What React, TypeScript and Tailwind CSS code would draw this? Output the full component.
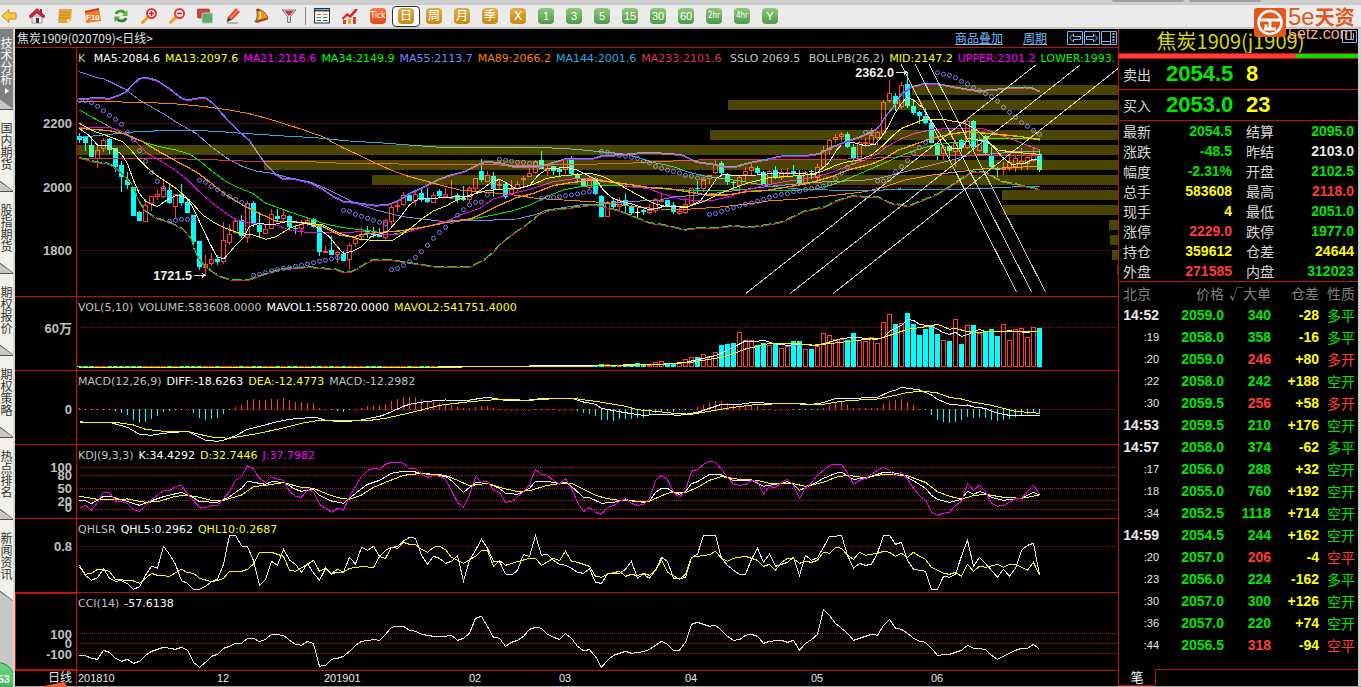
import React from "react";

type Dir = "u" | "d" | "w";

type Candle = {
  dir: Dir;
  high: number;
  top: number;
  bottom: number;
  low: number;
};

type PlotLine = {
  color: string;
  points: string;
  width?: number;
};

type Label = {
  text: string;
  color: string;
};

const STEP = 18;
const FIRST = 10.5;

// direction, high, body top, body bottom, low (three chart units per pixel)
const candles: Candle[] = `
d265,273,285,293 d273,273,294,318 d280,300,336,336 u300,316,341,369 u280,286,312,320 d280,282,314,326
d310,310,366,382 d348,361,395,441 d380,404,420,433 d426,426,513,513 d497,502,528,528 u463,480,530,530
u453,453,477,497 u433,447,455,464 u406,429,454,460 d418,436,473,478 u447,447,485,520 d418,448,474,482
d460,472,503,503 d510,510,590,613 d588,588,665,675 u630,656,668,693 u624,642,656,662 d630,642,650,659
u532,586,650,656 u536,568,592,600 u520,529,562,567 d509,526,574,579 u468,474,577,593 d467,474,536,547
d500,540,560,580 u539,553,566,566 u493,508,550,550 d493,513,521,528 u496,511,521,529 d510,513,546,557
d540,549,552,567 u526,538,551,570 u520,526,534,542 d519,522,545,548 d536,540,620,632 u601,618,622,625
d574,614,630,630 u617,622,630,653 d618,626,648,648 u594,601,644,674 u576,583,596,606 u547,568,575,587
d542,556,562,579 d547,566,571,578 d550,570,576,576 u521,526,578,582 u481,486,530,541 u471,479,486,502
u441,451,479,484 d450,451,468,468 u439,446,468,482 d432,445,466,470 d430,461,470,474 u440,450,472,474
d432,438,454,458 u430,447,455,458 u406,455,458,460 d444,450,465,474 d422,460,464,468 u423,430,464,475
u398,398,431,438 d343,378,405,412 u378,391,410,412 d380,393,432,457 u402,418,422,434 d412,417,455,462
u405,432,445,449 u407,418,432,440 u392,400,405,427 u364,384,394,394 u345,349,382,386 d318,346,371,371
u362,368,378,392 d362,364,377,391 d370,373,380,395 u338,343,373,386 d333,342,388,394 d384,389,401,412
d400,402,425,425 u393,401,427,434 d396,400,447,450 d450,453,515,515 u468,470,515,515 d460,468,486,492
u457,466,486,500 d445,466,480,500 d480,487,503,510 w487,501,503,519 d491,495,500,510 u476,496,502,506
u460,462,496,504 u448,465,468,470 d466,466,481,483 d471,480,502,508 u482,498,506,510 u460,478,503,508
u430,430,480,480 d407,429,431,447 u398,402,430,440 u390,391,402,416 u343,357,382,386 d349,355,384,389
d384,388,410,420 d405,411,414,439 u390,396,423,446 u366,379,389,408 u356,367,376,390 d362,370,384,388
d377,381,416,418 u375,379,418,424 d363,375,395,402 u371,381,397,405 u370,380,383,392 d360,378,388,390
d375,390,413,422 u377,381,413,420 d375,377,381,403 u356,367,397,411 u302,314,364,368 u282,286,313,330
u267,276,284,293 u262,268,275,291 d262,268,307,310 d298,306,340,345 u288,292,346,350 u279,292,296,307
u250,270,297,302 u259,262,277,300 u166,170,265,271 u106,145,167,173 d143,153,176,197 u112,121,185,193
d82,117,183,189 d163,183,204,210 d198,201,214,237 d189,212,234,237 d231,234,294,295 d294,294,332,345
u301,306,325,344 d300,303,317,340 u285,294,321,365 d283,286,310,320 u223,229,307,312 d226,228,306,316
u277,285,317,320 d270,273,323,330 d306,333,366,369 d366,369,376,395 u350,369,373,389 u330,352,370,377
u330,340,366,380 u310,349,356,376 u333,337,355,374 u309,327,346,350 d314,327,375,382
`
  .trim()
  .split(/\s+/)
  .map((item) => {
    const [high, top, bottom, low] = item.slice(1).split(",").map(Number);
    return { dir: item[0] as Dir, high, top, bottom, low };
  });

const upperBand =
  "10,162 64,157 100,160 130,150 150,140 170,118 190,100 208,96 244,106 280,130 316,158 334,165 370,158 388,158 410,172 442,210 496,265 520,285 545,322 568,355 600,388 620,400 660,402 700,412 740,432 770,452 800,468 840,473 900,481 940,477 970,465 1000,445 1040,427 1082,405 1122,390 1162,380 1192,365 1212,355 1232,349 1272,353 1312,364 1352,366 1392,364 1432,352 1472,340 1552,340 1577,332 1632,329 1682,324 1742,323 1812,328 1832,335 1862,350 1912,357 1942,363 1982,363 2032,350 2080,341 2127,330 2187,332 2232,325 2262,308 2307,290 2352,275 2387,260 2407,247 2427,215 2452,185 2477,145 2507,125 2547,114 2597,118 2647,128 2707,137 2767,132 2807,127 2847,126 2867,128 2891,138";

const lowerBand =
  "10,337 60,350 100,355 140,385 170,420 190,470 210,498 240,518 280,530 320,550 345,578 360,625 380,655 410,680 430,692 460,702 520,703 560,688 620,670 700,665 780,672 800,680 825,680 860,660 890,643 940,643 1050,660 1082,664 1182,665 1222,645 1252,620 1272,597 1312,565 1352,538 1392,505 1422,494 1462,490 1552,478 1577,482 1632,497 1672,513 1722,533 1762,538 1827,553 1872,547 1922,547 1972,541 2022,546 2080,537 2117,530 2187,497 2247,485 2277,468 2327,452 2407,455 2442,473 2497,482 2547,462 2587,445 2627,420 2667,393 2687,380 2727,380 2777,408 2827,418 2891,432";

const priceLines: PlotLine[] = [
  {
    color: "#8080e8",
    points:
      "10,80 60,97 85,102 150,134 190,165 260,205 310,237 360,265 400,300 450,338 500,365 540,378 590,385 660,404 700,410 760,435 800,455 840,475 900,495 940,505 980,515 1040,522 1112,531 1192,525 1252,525 1322,522 1382,508 1412,495 1462,488 1512,480 1592,476 1652,470 1752,465 1792,456 1842,452 1892,448 1952,440 2032,430 2080,424 2127,420 2217,412 2307,408 2367,405 2407,400 2467,385 2517,373 2567,360 2627,345 2677,332 2767,325 2827,320 2891,318",
  },
  {
    color: "#ff8000",
    points:
      "10,169 100,170 280,175 380,184 460,195 520,206 600,228 680,254 740,275 800,308 860,335 900,355 950,377 1000,395 1050,408 1092,420 1152,435 1212,440 1292,447 1382,460 1462,465 1592,473 1672,485 1752,492 1832,493 1932,486 2032,475 2077,468 2167,462 2267,452 2367,440 2417,428 2487,405 2567,390 2667,378 2717,372 2817,367 2891,364",
  },
  {
    color: "#30a8e0",
    points:
      "10,277 100,268 180,260 260,257 350,256 420,259 500,265 640,274 720,278 820,288 920,294 1000,300 1092,307 1272,308 1362,307 1462,310 1532,316 1592,322 1652,328 1692,340 1732,352 1792,365 1832,380 1882,392 1932,400 1992,408 2077,423 2167,432 2287,436 2407,436 2467,432 2627,433 2727,430 2807,426 2891,425",
  },
  {
    color: "#e03058",
    points:
      "10,342 100,340 260,340 330,342 400,344 500,348 600,350 700,350 800,355 1050,358 1150,358 1232,359 1350,362 1500,358 1632,356 1732,351 1832,346 1932,343 2217,343 2317,342 2427,338 2507,333 2567,330 2667,332 2891,332",
  },
  {
    color: "#00e800",
    points:
      "10,195 60,223 110,250 160,275 200,290 250,305 300,315 340,327 370,347 410,380 450,410 480,425 530,445 570,475 640,500 700,520 740,535 800,548 860,555 900,560 930,570 970,565 1000,555 1082,538 1122,528 1192,522 1252,510 1312,497 1362,480 1412,455 1462,435 1512,425 1562,420 1632,422 1712,428 1792,434 1892,437 1992,434 2127,438 2217,432 2267,420 2307,405 2347,388 2407,362 2467,335 2517,316 2567,302 2627,293 2687,288 2747,280 2891,282",
  },
  {
    color: "#f000f0",
    points:
      "10,247 100,247 140,260 180,290 210,322 240,340 290,370 330,400 370,440 410,475 450,505 480,525 530,535 600,540 640,555 700,563 780,563 860,560 900,567 950,570 1000,560 1050,545 1112,528 1152,510 1212,490 1252,462 1312,445 1372,430 1432,410 1502,400 1552,400 1602,410 1662,425 1712,430 1762,447 1812,462 1862,467 1912,466 1962,455 2012,435 2067,420 2127,410 2207,398 2267,383 2317,362 2367,345 2407,325 2427,308 2477,280 2517,265 2567,254 2627,250 2717,250 2747,260 2787,275 2827,290 2891,315",
  },
  {
    color: "#f09000",
    width: 4,
    points:
      "10,250 100,257 150,268 200,290 250,320 300,348 360,380 400,410 450,450 500,480 550,505 600,528 700,535 740,545 790,570 830,576 860,568 900,563 980,557 1050,545 1132,528 1182,522 1222,505 1272,480 1322,458 1372,445 1432,422 1492,412 1552,405 1612,412 1672,420 1722,428 1772,430 1832,440 1892,450 1952,450 2012,440 2067,437 2127,427 2197,415 2267,395 2317,375 2387,357 2427,340 2467,315 2517,298 2567,280 2627,267 2677,260 2767,268 2837,275 2891,285",
  },
  {
    color: "#f8f800",
    points:
      "10,235 50,257 100,275 140,290 165,315 190,345 210,365 240,390 300,430 340,465 380,510 410,530 450,550 490,565 530,570 570,583 600,575 640,550 690,533 740,540 790,565 850,582 910,588 950,586 980,567 1010,545 1040,520 1072,498 1112,482 1142,465 1182,450 1232,437 1282,432 1332,430 1372,418 1412,400 1462,392 1542,385 1582,395 1632,420 1682,448 1732,475 1772,485 1832,486 1882,470 1932,445 1972,430 2012,415 2080,398 2127,395 2187,390 2237,380 2277,362 2307,352 2347,345 2387,330 2417,305 2447,275 2477,250 2507,238 2547,222 2607,224 2667,235 2707,258 2737,290 2767,315 2817,322 2891,328",
  },
  {
    color: "#f0f0f0",
    points:
      "10,250 40,272 64,300 100,303 136,327 154,355 172,405 190,445 210,470 244,485 280,460 305,450 334,460 352,490 380,550 400,592 424,638 445,640 480,600 505,575 520,545 550,535 586,540 640,528 690,535 715,542 740,560 760,575 780,600 802,626 830,618 856,605 885,575 910,567 935,560 970,520 1000,480 1030,460 1072,460 1142,455 1182,455 1222,430 1247,410 1272,403 1288,412 1322,432 1362,420 1387,390 1414,372 1472,367 1502,375 1532,390 1562,405 1582,435 1607,458 1632,468 1672,478 1722,495 1772,482 1832,488 1872,468 1902,430 1922,400 1942,388 1992,393 2042,390 2107,384 2217,388 2257,355 2282,315 2307,288 2337,294 2367,302 2397,298 2417,275 2437,245 2457,205 2477,175 2492,157 2512,165 2542,190 2567,230 2597,275 2627,310 2657,310 2677,280 2707,285 2727,285 2757,310 2777,335 2807,358 2847,355 2872,342 2891,347",
  },
];

const sar = [
  167, 166, 173, 184, 197, 211, 223, 238, 262, 284, 317, 349, 382, 409, 430,
  529, 526, 523, 523, 523, 406, 412, 424, 434, 446, 455, 463, 472, 482, 691,
  688, 683, 678, 674, 670, 668, 664, 661, 657, 653, 649, 646, 642, 638, 496,
  499, 508, 514, 520, 526, 532, 537, 674, 670, 661, 650, 637, 620, 601, 580,
  562, 547, 530, 511, 494, 480, 472, 471, 449, 425, 343, 346, 349, 352, 352,
  355, 357, 460, 457, 457, 455, 452, 450, 447, 443, 440, 438, 319, 322, 328,
  331, 334, 337, 340, 348, 354, 364, 370, 375, 379, 384, 391, 393, 399, 402,
  508, 506, 499, 493, 488, 483, 478, 474, 469, 463, 457, 452, 448, 446, 440,
  438, 434, 430, 427, 424, 416, 401, 384, 367, 352, 340, 262, 262, 408, 408,
  402, 380, 365, 347, 325, 308, 292, 280, 83, 88, 91, 98, 109, 117, 128, 137,
  146, 155, 169, 187, 202, 217, 233, 244, 256, 268,
];

// turnover by price level: [y, left edge]
const levels = [
  [120, 2507],
  [165, 1956],
  [210, 2679],
  [255, 1902],
  [300, 3],
  [345, 564],
  [390, 888],
  [435, 2778],
  [480, 2781],
  [525, 3099],
  [570, 3102],
  [615, 3108],
  [660, 3123],
];

const trends = [
  [2475, 57, 2822, 742],
  [2517, 57, 2867, 742],
  [2559, 57, 2909, 742],
  [2010, 745, 2879, 60],
  [2143, 745, 3012, 60],
  [2272, 745, 3127, 70],
];

const volumeTops = [
  210, 207, 207, 210, 212, 210, 211, 205, 208, 209, 202, 199, 206, 206, 205,
  193, 187, 187, 178, 184, 172, 151, 148, 144, 112, 136, 136, 151, 144, 151,
  145, 160, 154, 139, 138, 163, 163, 154, 115, 121, 133, 133, 136, 115, 136,
  139, 127, 145, 82, 58, 88, 85, 55, 88, 120, 103, 94, 118, 136, 139, 73, 148,
  91, 91, 115, 109, 103, 124, 88, 136, 103, 100, 127, 97, 100,
];

const macdBars = [
  7, -1, -1, -1, -1, -1, -5, -11, -17, -32, -41, -38, -29, -20, -8, -5, -1, -1,
  1, -11, -26, -32, -29, -26, -14, -2, 10, 16, 31, 34, 31, 31, 34, 34, 37, 30,
  25, 25, 22, 22, 7, 1, -1, -5, -8, -1, 1, 7, 13, 13, 13, 19, 28, 34, 40, 40,
  40, 34, 28, 28, 22, 16, 16, 10, 7, 7, 10, 13, 13, 7, 3, 1, 1, 1, 1, 1, 4, 4,
  4, 4, 1, 1, 1, -5, -13, -14, -20, -32, -32, -35, -29, -29, -29, -26, -26,
  -18, -12, -8, -5, -8, -4, -1, 3, 10, 16, 22, 28, 28, 22, 16, 13, 13, 16, 13,
  4, 4, 1, 1, 1, -1, -1, -1, -1, -1, 7, 13, 20, 23, 16, 7, 7, 7, 7, 7, 19, 28,
  29, 34, 25, 16, 4, -2, -17, -32, -38, -41, -38, -34, -23, -26, -23, -26, -32,
  -35, -32, -29, -23, -17, -14, -8, -14,
];

// the points of the lower panels are "bar index, y"
const volumeLines: PlotLine[] = [
  {
    color: "#f0f0f0",
    points:
      "0,217 60,216 64,214 75,213 96,209 101,202 104,190 106,182 108,166 110,147 111,138 113,139 114,136 116,147 118,151 120,148 123,151 124,146 127,131 129,127 131,130 133,132 134,127 135,109 136,100 137,91 138,74 139,76 140,88 142,94 143,103 144,113 145,118 146,112 147,124 148,119 149,109 150,104 151,109 154,110 155,107 156,110 158,112 160,108",
  },
  {
    color: "#f8f800",
    points:
      "0,218 50,218 64,216 86,213 97,208 102,202 105,193 107,187 109,176 111,162 113,154 115,145 120,147 122,151 125,146 127,142 129,137 132,132 133,132 134,127 136,115 138,103 140,98 142,92 143,88 144,95 145,103 146,100 148,110 150,112 152,109 160,109",
  },
];

const macdLines: PlotLine[] = [
  {
    color: "#f0f0f0",
    points:
      "0,380 2,384 5,382 8,397 10,418 12,421 14,415 18,409 19,418 21,436 23,439 24,436 26,422 28,403 30,394 33,380 35,373 39,367 40,370 41,376 44,381 47,375 50,364 51,358 54,334 55,328 58,319 61,315 64,318 68,307 71,316 75,315 77,310 82,310 84,321 86,328 87,340 90,350 92,356 94,361 97,358 100,361 103,352 105,340 107,328 110,328 112,323 116,325 122,328 124,323 126,310 129,310 133,307 135,290 136,286 137,277 140,285 142,300 143,313 145,328 147,331 148,330 149,336 151,340 152,349 154,358 155,361 160,361",
  },
  {
    color: "#f8f800",
    points:
      "0,382 6,382 9,390 11,403 14,409 18,409 20,418 22,426 25,430 29,418 33,403 37,385 40,376 48,377 51,370 54,358 57,345 60,331 65,320 70,313 75,316 80,310 83,312 86,319 89,328 91,334 93,344 96,349 99,355 102,358 106,346 109,337 113,328 118,326 124,328 127,319 129,316 133,312 136,301 138,292 141,289 143,294 145,307 147,312 149,322 152,331 154,340 156,349 160,355",
  },
];

const kdjLines: PlotLine[] = [
  {
    color: "#f0f0f0",
    points:
      "0,616 1,617 2,626 4,604 5,604 7,614 10,631 12,617 14,605 17,592 19,608 20,620 23,622 25,605 27,580 28,559 31,568 32,560 34,562 36,583 37,589 39,583 40,601 42,618 44,625 46,595 48,568 50,556 52,535 54,529 56,531 59,541 61,544 62,557 64,592 66,563 68,565 70,580 71,595 73,598 74,590 75,580 76,559 78,559 80,566 81,562 82,574 84,607 85,608 87,625 89,622 91,614 94,622 95,619 96,592 97,580 98,580 99,592 100,598 101,590 102,566 103,560 105,538 107,540 109,557 112,556 114,574 117,565 118,560 119,568 120,586 122,570 124,550 126,535 127,532 129,553 131,550 133,538 134,532 135,532 137,538 139,557 141,580 142,601 143,613 145,622 147,613 148,589 149,598 150,590 151,595 152,607 154,616 157,610 159,592 160,600",
  },
  {
    color: "#f8f800",
    points:
      "0,604 3,613 8,612 11,622 13,620 16,604 18,601 20,607 22,616 24,616 27,600 29,575 31,571 34,563 37,577 39,580 41,595 43,608 45,613 47,600 49,577 51,562 54,541 57,535 61,541 63,556 65,572 68,565 70,577 73,590 75,587 78,571 80,566 82,565 84,583 86,601 88,611 90,616 93,619 95,618 98,595 99,592 101,593 103,577 105,556 107,545 110,553 113,556 115,565 119,566 121,574 124,562 126,547 128,541 131,548 134,538 138,542 140,556 141,562 143,590 145,604 147,612 149,602 151,598 154,607 157,610 160,600",
  },
  {
    color: "#f000f0",
    points:
      "0,640 1,631 2,645 3,623 4,592 5,592 6,619 7,619 8,626 9,643 10,650 11,631 12,613 13,601 14,586 15,587 16,575 17,571 18,597 19,617 20,637 21,637 22,632 23,631 24,610 25,590 26,556 27,545 28,512 29,522 30,550 31,562 32,545 33,553 34,556 35,589 36,604 37,607 38,584 39,592 40,628 41,640 42,652 43,640 44,645 45,605 46,575 47,544 48,526 49,520 50,523 51,508 52,502 53,502 54,505 55,520 56,521 57,537 58,547 59,541 60,544 61,553 62,587 63,622 64,637 65,600 66,544 67,562 68,559 69,586 70,593 71,622 72,620 73,605 74,590 75,570 76,523 77,538 78,541 79,557 80,567 81,551 82,580 83,622 84,650 85,637 86,652 87,658 88,637 89,632 90,619 91,611 92,625 93,631 94,629 95,610 96,556 97,541 98,553 99,592 100,607 101,586 102,529 103,523 104,508 105,499 106,502 107,523 108,547 109,568 110,571 111,569 112,556 113,560 114,598 115,574 116,578 117,562 118,553 119,571 120,610 121,578 122,565 123,541 124,526 125,511 126,508 127,508 128,533 129,568 130,556 131,550 132,538 133,526 134,517 135,526 136,544 137,532 138,553 139,580 140,602 141,616 142,652 143,661 144,655 145,652 146,631 147,619 148,565 149,586 150,571 151,590 152,625 153,634 154,631 155,622 156,610 157,610 158,590 159,571 160,597",
  },
];

const qhlLines: PlotLine[] = [
  {
    color: "#e8e8e8",
    points:
      "0,811 1,841 2,856 3,848 4,821 5,850 6,859 7,857 8,866 9,883 10,875 11,841 12,814 13,819 14,754 15,778 16,808 17,857 18,865 19,883 20,883 21,874 22,860 23,852 24,808 25,721 26,721 27,753 28,755 29,797 30,871 31,853 32,799 33,811 34,763 35,795 36,808 37,832 38,806 39,834 40,856 41,821 42,837 43,831 44,831 45,787 46,807 47,757 48,766 49,754 50,784 51,766 52,757 53,755 54,738 55,727 56,730 57,781 58,808 59,784 60,790 61,805 62,799 63,782 64,858 65,796 66,766 67,733 68,760 69,799 70,799 71,837 72,840 73,826 74,778 75,785 76,721 77,781 78,778 79,796 80,808 81,811 82,820 83,832 84,835 85,821 86,862 87,865 88,837 89,835 90,835 91,823 92,799 93,850 94,837 95,850 96,826 97,787 98,799 99,850 100,852 101,847 102,788 103,778 104,721 105,721 106,721 107,790 108,811 109,826 110,838 111,838 112,793 113,760 114,802 115,778 116,814 117,808 118,802 119,787 120,841 121,781 122,796 123,788 124,757 125,724 126,724 127,721 128,781 129,820 130,805 131,811 132,808 133,774 134,721 135,721 136,748 137,742 138,796 139,823 140,826 141,829 142,883 143,883 144,844 145,847 146,838 147,783 148,736 149,814 150,787 151,806 152,826 153,847 154,823 155,844 156,820 157,766 158,751 159,745 160,840",
  },
  {
    color: "#f8f800",
    points:
      "0,817 1,838 2,835 3,823 4,825 5,829 6,853 9,858 10,865 11,850 12,835 13,841 15,844 17,823 18,833 19,835 20,850 22,860 23,857 24,850 25,829 27,829 28,823 29,807 30,772 32,772 34,784 35,826 36,829 38,808 39,796 40,829 41,819 42,835 43,823 44,831 45,820 47,815 49,817 50,785 51,790 52,757 53,760 54,742 55,748 56,748 57,763 58,772 59,757 60,754 61,764 62,787 64,805 66,784 67,766 68,768 69,814 70,796 71,811 73,800 75,790 76,790 77,811 79,790 80,797 81,769 82,799 83,802 85,814 86,844 87,847 88,837 90,829 91,844 92,838 93,842 94,835 95,841 96,826 97,796 98,832 100,853 101,838 102,787 103,784 105,779 106,769 107,790 108,799 109,790 111,784 113,796 114,814 115,808 116,826 117,802 118,790 119,791 120,805 121,799 122,802 123,796 124,772 125,775 126,757 127,760 128,781 129,793 130,772 131,781 133,775 134,769 135,772 136,784 137,775 138,787 139,772 140,784 141,793 142,817 143,826 144,835 145,838 146,832 147,844 148,808 149,829 150,814 151,817 153,808 154,817 155,808 156,808 158,826 159,802 160,841",
  },
];

const cciLines: PlotLine[] = [
  {
    color: "#e8e8e8",
    points:
      "0,1081 1,1082 2,1090 3,1093 4,1066 5,1072 6,1090 7,1099 8,1093 9,1105 10,1099 11,1081 12,1069 14,1057 16,1063 17,1057 18,1066 19,1102 20,1117 21,1102 22,1084 23,1078 24,1060 25,1054 26,1045 27,1045 28,1030 29,1030 30,1040 31,1033 32,1018 34,1021 35,1036 36,1048 37,1051 38,1039 39,1046 40,1114 41,1111 42,1093 43,1090 44,1084 45,1069 46,1051 47,1039 49,1034 50,1036 51,1018 52,997 53,994 54,994 55,1006 56,1009 57,1018 59,1024 61,1024 62,1021 63,1036 64,1030 65,1015 66,970 67,964 68,995 69,1027 70,1030 71,1054 72,1042 73,1036 74,1024 75,1003 76,997 77,1000 78,1018 79,1027 80,1033 81,1016 82,1030 83,1054 84,1067 85,1064 86,1085 87,1117 88,1096 89,1081 91,1069 92,1075 94,1070 95,1063 96,1051 97,1039 98,1048 99,1066 100,1066 101,1042 102,988 103,982 104,988 105,994 106,991 107,1006 108,1024 109,1036 110,1034 111,1021 112,1018 113,1024 114,1045 115,1039 117,1036 118,1042 119,1036 120,1066 121,1045 122,1034 123,1018 124,943 125,961 126,985 128,1015 129,1036 131,1024 132,1018 133,1021 134,991 135,973 136,1000 137,1003 138,1015 139,1030 140,1039 141,1042 142,1060 143,1081 145,1078 147,1066 148,1051 149,1060 151,1063 152,1081 153,1093 155,1075 156,1066 157,1060 158,1060 159,1048 160,1063",
  },
];

const toPoints = (points: string) =>
  points
    .split(" ")
    .map((pair) => {
      const [index, y] = pair.split(",").map(Number);
      return `${FIRST + index * STEP},${y}`;
    })
    .join(" ");

const Lines = ({ lines, indexed }: { lines: PlotLine[]; indexed?: boolean }) => (
  <>
    {lines.map((line, i) => (
      <polyline
        key={i}
        points={indexed ? toPoints(line.points) : line.points}
        fill="none"
        stroke={line.color}
        strokeWidth={line.width ?? 3}
      />
    ))}
  </>
);

const Grid = ({ rows, color = "#b80c0c" }: { rows: number[]; color?: string }) => (
  <>
    {rows.map((y) => (
      <line
        key={y}
        x1="6"
        x2="3123"
        y1={y}
        y2={y}
        stroke={color}
        strokeWidth="3"
        strokeDasharray="3 3"
      />
    ))}
  </>
);

type PanelProps = {
  viewBox: string;
  labels: Label[];
  ticks: { text: string; y: number }[];
  axisBox: string;
  className: string;
  active?: boolean;
  children: React.ReactNode;
};

const Panel: React.FC<PanelProps> = ({
  viewBox,
  labels,
  ticks,
  axisBox,
  className,
  active,
  children,
}) => {
  return (
    <div className={`flex border-b border-[#c01008] ${className}`}>
      <div
        className={`w-[62px] shrink-0 border-r border-[#c01008] ${
          active ? "outline-1 -outline-offset-1 outline-[#c01008]" : ""
        }`}
      >
        <svg viewBox={axisBox} preserveAspectRatio="none" className="block size-full">
          {ticks.map((tick, i) => (
            <text
              key={i}
              x="57"
              y={tick.y}
              textAnchor="end"
              fill="#c0c0c0"
              className="font-['Liberation_Sans','Noto_Sans_CJK_SC',sans-serif] text-[13px] font-bold"
            >
              {tick.text}
            </text>
          ))}
        </svg>
      </div>
      <div className="relative min-w-0 flex-1 overflow-hidden">
        <svg
          viewBox={viewBox}
          preserveAspectRatio="none"
          shapeRendering="crispEdges"
          className="block size-full"
        >
          {children}
        </svg>
        <div className="absolute top-[3px] left-px flex gap-[5px] text-[11px] leading-[15px] whitespace-nowrap">
          {labels.map((label) => (
            <span key={label.text} style={{ color: label.color }}>
              {label.text}
            </span>
          ))}
        </div>
      </div>
    </div>
  );
};

const PricePanel = () => (
  <Panel
    className="min-h-0 flex-1"
    viewBox="3 9 3123 744"
    axisBox="0 0 61 248"
    ticks={[
      { text: "2200", y: 80 },
      { text: "2000", y: 144 },
      { text: "1800", y: 207 },
    ]}
    labels={[
      { text: "K\u00a0", color: "#c0c0c0" },
      { text: "MA5:2084.6", color: "#ffffff" },
      { text: "MA13:2097.6", color: "#ffff00" },
      { text: "MA21:2116.6", color: "#ff00ff" },
      { text: "MA34:2149.9", color: "#00ff00" },
      { text: "MA55:2113.7", color: "#8080ff" },
      { text: "MA89:2066.2", color: "#ff8000" },
      { text: "MA144:2001.6", color: "#30a8e0" },
      { text: "MA233:2101.6", color: "#e03058" },
      { text: "\u00a0SSLO 2069.5", color: "#c0c0c0" },
      { text: "\u00a0BOLLPB(26,2)", color: "#c0c0c0" },
      { text: "MID:2147.2", color: "#ffff00" },
      { text: "UPPER:2301.2", color: "#ff00ff" },
      { text: "LOWER:1993.", color: "#00ff00" },
    ]}
  >
    <Grid rows={[235.5, 427.5, 616.5]} color="#980808" />
    {candles.map(({ dir, high, top, bottom, low }, i) => {
      const x = 3 + i * STEP;
      if (dir === "u") {
        return (
          <g key={i} stroke="#ff3c38" strokeWidth="3" fill="none">
            <path d={`M${x + 7.5} ${high}V${top}M${x + 7.5} ${bottom}V${low}`} />
            <rect x={x + 1.5} y={top + 1} width="12" height={Math.max(bottom - top - 2, 3)} />
          </g>
        );
      }
      const color = dir === "w" ? "#ffffff" : "#00ffff";
      return (
        <g key={i} fill={color}>
          <rect x={x + 6} y={high} width="3" height={low - high} />
          <rect x={x} y={top} width="15" height={Math.max(bottom - top, 3)} />
        </g>
      );
    })}
    <Lines lines={priceLines} />
    <polyline points={upperBand} fill="none" stroke="#f000f0" strokeWidth="3" transform="translate(0 3)" />
    <polyline points={upperBand} fill="none" stroke="#30a8e0" strokeWidth="3" />
    <polyline points={lowerBand} fill="none" stroke="#d02840" strokeWidth="3" transform="translate(0 3)" />
    <polyline
      points={lowerBand}
      fill="none"
      stroke="#00e800"
      strokeWidth="3"
      strokeDasharray="30 9"
    />
    {sar.map((y, i) => (
      <circle
        key={i}
        cx={FIRST + i * STEP}
        cy={y}
        r="6"
        fill="none"
        stroke="#8080ff"
        strokeWidth="3"
        shapeRendering="auto"
      />
    ))}
    {trends.map(([x1, y1, x2, y2]) => (
      <line key={x1} x1={x1} y1={y1} x2={x2} y2={y2} stroke="#c8c8c8" strokeWidth="3" />
    ))}
    {levels.map(([y, x]) => (
      <rect key={y} x={x} y={y} width={3126 - x} height="30" fill="#ffee00" fillOpacity="0.29" />
    ))}
    <g stroke="#e0e0e0" strokeWidth="3" fill="none">
      <path d="M2460 82H2490M2484 76L2493 82L2484 88" />
      <path d="M354 691H384M378 685L387 691L378 697" />
    </g>
    <g
      fill="#f0f0f0"
      textAnchor="end"
      className="font-['Liberation_Sans',sans-serif] text-[38px] font-bold"
    >
      <text x="2454" y="96">2362.0</text>
      <text x="348" y="704">1721.5</text>
    </g>
  </Panel>
);

const VolumePanel = () => (
  <Panel
    className="h-[74px] shrink-0"
    viewBox="3 6 3123 219"
    axisBox="0 0 61 73"
    ticks={[{ text: "60万", y: 36 }]}
    labels={[
      { text: "VOL(5,10)", color: "#c0c0c0" },
      { text: "VOLUME:583608.0000", color: "#c0c0c0" },
      { text: "MAVOL1:558720.0000", color: "#ffffff" },
      { text: "MAVOL2:541751.4000", color: "#ffff00" },
    ]}
  >
    <Grid rows={[97.5]} color="#980808" />
    {candles.map(({ dir }, i) => {
      const top = i < 86 ? 213 : volumeTops[i - 86];
      const x = 3 + i * STEP;
      return dir === "u" && top < 208 ? (
        <rect
          key={i}
          x={x + 1.5}
          y={top}
          width="12"
          height={214.5 - top}
          fill="none"
          stroke="#ff3c38"
          strokeWidth="3"
        />
      ) : (
        <rect
          key={i}
          x={x}
          y={top}
          width="15"
          height={216 - top}
          fill={dir === "u" ? "#ff3c38" : "#00ffff"}
        />
      );
    })}
    <Lines lines={volumeLines} indexed />
  </Panel>
);

const MacdPanel = () => (
  <Panel
    className="h-[74px] shrink-0"
    viewBox="3 228 3123 219"
    axisBox="0 0 61 73"
    ticks={[{ text: "0", y: 43 }]}
    labels={[
      { text: "MACD(12,26,9)", color: "#c0c0c0" },
      { text: "DIFF:-18.6263", color: "#ffffff" },
      { text: "DEA:-12.4773", color: "#ffff00" },
      { text: "MACD:-12.2982", color: "#c0c0c0" },
    ]}
  >
    <Grid rows={[343.5]} />
    {macdBars.map((value, i) => (
      <rect
        key={i}
        x={9 + i * STEP}
        y={value > 0 ? 345 - value : 342}
        width="3"
        height={Math.max(Math.abs(value), 3)}
        fill={value > 0 ? "#ff3c38" : "#00ffff"}
      />
    ))}
    <Lines lines={macdLines} indexed />
  </Panel>
);

const KdjPanel = () => (
  <Panel
    className="h-[74px] shrink-0"
    viewBox="3 450 3123 219"
    axisBox="0 0 61 73"
    ticks={[
      { text: "100", y: 27 },
      { text: "80", y: 35 },
      { text: "50", y: 48 },
      { text: "20", y: 61 },
      { text: "0", y: 67 },
    ]}
    labels={[
      { text: "KDJ(9,3,3)", color: "#c0c0c0" },
      { text: "K:34.4292", color: "#ffffff" },
      { text: "D:32.7446", color: "#ffff00" },
      { text: "J:37.7982", color: "#ff00ff" },
    ]}
  >
    <Grid rows={[517.5, 541.5, 580.5, 616.5, 643.5]} color="#c81010" />
    <Lines lines={kdjLines} indexed />
  </Panel>
);

const QhlPanel = () => (
  <Panel
    className="h-[74px] shrink-0"
    viewBox="3 672 3123 219"
    axisBox="0 0 61 73"
    ticks={[{ text: "0.8", y: 32 }]}
    labels={[
      { text: "QHLSR", color: "#c0c0c0" },
      { text: "QHL5:0.2962", color: "#ffffff" },
      { text: "QHL10:0.2687", color: "#ffff00" },
    ]}
  >
    <Grid rows={[754.5]} color="#980808" />
    <Lines lines={qhlLines} indexed />
  </Panel>
);

const CciPanel = () => (
  <Panel
    active
    className="h-[78px] shrink-0"
    viewBox="3 894 3123 231"
    axisBox="0 0 61 77"
    ticks={[
      { text: "100", y: 46 },
      { text: "0", y: 55 },
      { text: "-100", y: 66 },
    ]}
    labels={[
      { text: "CCI(14)", color: "#c0c0c0" },
      { text: "-57.6138", color: "#ffffff" },
    ]}
  >
    <Grid rows={[1015.5, 1045.5, 1075.5]} color="#c81010" />
    <Lines lines={cciLines} indexed />
  </Panel>
);

const dates = [
  { text: "201810", x: 1 },
  { text: "12", x: 140 },
  { text: "201901", x: 247 },
  { text: "02", x: 392 },
  { text: "03", x: 482 },
  { text: "04", x: 608 },
  { text: "05", x: 734 },
  { text: "06", x: 854 },
];

const TimeAxis = () => (
  <div className="flex h-[15px] shrink-0">
    <div className="w-[62px] shrink-0 border-r border-[#c01008] pr-1 text-right text-[12px] leading-[15px] text-[#e8e8e8]">
      日线
    </div>
    <svg viewBox="0 0 1041 15" preserveAspectRatio="none" className="block h-full min-w-0 flex-1">
      {dates.map((date) => (
        <text
          key={date.text}
          x={date.x}
          y="11"
          fill="#e8e8e8"
          className="font-['Liberation_Sans',sans-serif] text-[11px]"
        >
          {date.text}
        </text>
      ))}
    </svg>
  </div>
);

const icons: { name: string; art: React.ReactNode }[] = [
  {
    name: "后退",
    art: (
      <path d="M1 8L8 1.5V5H15V11H8V14.5Z" fill="#fcc838" stroke="#c88a18" strokeLinejoin="round" />
    ),
  },
  {
    name: "主页",
    art: (
      <>
        <path d="M3 8H13V15H3Z" fill="#e8e8ee" stroke="#888" strokeWidth=".8" />
        <path d="M11 1H13V5H11Z" fill="#883038" />
        <path d="M0 8L8 .5L16 8L14.5 10L8 5L1.5 10Z" fill="#c82838" stroke="#801820" strokeWidth=".6" />
        <path d="M7 10H10V15H7Z" fill="#4a3038" />
      </>
    ),
  },
  {
    name: "便笺",
    art: (
      <>
        <path d="M2 1H15L14 12L10 15H1Z" fill="#e8a838" />
        <path d="M3 4H13M3 7H13M2 10H12" stroke="#c08420" fill="none" />
        <path d="M14 11L10 15V11Z" fill="#fce090" />
      </>
    ),
  },
  {
    name: "F10",
    art: (
      <>
        <path d="M0 3L14 0L16 13L1 15Z" fill="#f08028" />
        <path d="M0 3L14 0V2L0 5Z" fill="#d83818" />
        <text x="1" y="12" fill="#fff" className="font-['Liberation_Sans',sans-serif] text-[8px] font-bold">
          F10
        </text>
      </>
    ),
  },
  {
    name: "刷新",
    art: (
      <>
        <path d="M3 6C4 2.5 9 2 12 5" fill="none" stroke="#40a030" strokeWidth="2.8" />
        <path d="M14.5 2V8H9Z" fill="#58b840" />
        <path d="M13 10C12 13.5 7 14 4 11" fill="none" stroke="#308828" strokeWidth="2.8" />
        <path d="M1.5 14V8.5H7Z" fill="#48a838" />
      </>
    ),
  },
  {
    name: "放大",
    art: (
      <>
        <path d="M1.5 14.5L6 10" stroke="#f0a020" strokeWidth="3" strokeLinecap="round" />
        <circle cx="10.5" cy="5.5" r="4.5" fill="#fff0f0" stroke="#e83830" strokeWidth="2" />
        <path d="M8 5.5H13M10.5 3V8" stroke="#d82020" strokeWidth="1.6" />
      </>
    ),
  },
  {
    name: "缩小",
    art: (
      <>
        <path d="M1.5 14.5L6 10" stroke="#f0a020" strokeWidth="3" strokeLinecap="round" />
        <circle cx="10.5" cy="5.5" r="4.5" fill="#fff0f0" stroke="#e83830" strokeWidth="2" />
        <path d="M8 5.5H13" stroke="#d82020" strokeWidth="1.6" />
      </>
    ),
  },
  {
    name: "叠加",
    art: (
      <>
        <rect x=".5" y="1" width="12" height="9" rx="1" fill="#d84040" stroke="#a02020" strokeWidth=".6" />
        <rect x="5" y="5" width="10.5" height="10" rx="1" fill="#68a870" stroke="#a8d0a8" />
      </>
    ),
  },
  {
    name: "画线",
    art: (
      <>
        <path d="M3 9L11 0L15 4L7 12Z" fill="#e84828" />
        <path d="M5 10.5L13 2" stroke="#f89070" strokeWidth="1.4" />
        <path d="M3 9L7 12L1.5 14Z" fill="#404040" />
        <path d="M2 15H13" stroke="#b0a0a0" strokeWidth="1.5" />
      </>
    ),
  },
  {
    name: "预警",
    art: (
      <>
        <path d="M4 1.5C9 1 13 5 15 10L2 14C5 10 4 6 4 1.5Z" fill="#e89828" stroke="#804810" strokeWidth=".9" />
        <path d="M6.5 4C8 6 7.5 9 6.5 11" stroke="#fce0a0" strokeWidth="1.6" fill="none" />
        <path d="M1 13L15 9.5V11.5L4 15Z" fill="#a84820" />
        <circle cx="5" cy="2" r="1.6" fill="#903020" />
      </>
    ),
  },
  {
    name: "选股",
    art: (
      <>
        <path d="M1 2H15L9.5 8.5V14.5H6.5V8.5Z" fill="#d8d8dc" stroke="#707078" strokeWidth=".9" />
        <path d="M3.5 3H12.5L8 8Z" fill="#d82838" />
      </>
    ),
  },
];

const tools: { name: string; art: React.ReactNode }[] = [
  {
    name: "报价",
    art: (
      <>
        <rect x=".5" y=".5" width="15" height="14.5" fill="#f8f8f8" stroke="#283040" />
        <path d="M1 2.5H15" stroke="#384858" strokeWidth="2" />
        <path d="M2.5 6.5H7M9 6.5H13.5" stroke="#e07020" strokeWidth="1.2" />
        <path d="M2.5 9.5H7M9 9.5H13.5" stroke="#30a040" strokeWidth="1.2" />
        <path d="M2.5 12.5H7M9 12.5H13.5" stroke="#3050a0" strokeWidth="1.2" />
      </>
    ),
  },
  {
    name: "走势",
    art: (
      <>
        <path d="M1 12H4V16H1ZM11 9H14V16H11Z" fill="#e04030" />
        <path d="M6 11H9V16H6Z" fill="#f0a020" />
        <path d="M0 10L5 5L8 7L13 1L16 1L14 4L8.5 10L5 8L1 12Z" fill="#e02020" />
      </>
    ),
  },
];

const periods = ["周", "月", "季", "X"];
const minutes = ["1", "3", "5", "15", "30", "60", "2hr", "4hr", "Y"];

const IconButton = ({ name, children }: { name: string; children: React.ReactNode }) => (
  <button type="button" aria-label={name} className="size-4 shrink-0">
    <svg viewBox="0 0 16 16" className="block size-4">
      {children}
    </svg>
  </button>
);

const gold =
  "size-4 shrink-0 rounded-sm bg-linear-to-b from-[#dcae48] to-[#c48a08] text-center text-[12px] leading-4 text-white";
const green =
  "flex size-4 shrink-0 items-center justify-center rounded-sm bg-linear-to-b from-[#92c67c] to-[#4c9a48] leading-4 text-white";

const Toolbar = () => (
  <header className="relative flex h-[29px] shrink-0 items-center gap-3 border-t-[5px] border-b-2 border-t-[#cecece] border-b-[#c8c4c0] bg-[#ebebeb] pl-px">
    {icons.map((icon) => (
      <IconButton key={icon.name} name={icon.name}>
        {icon.art}
      </IconButton>
    ))}
    <span className="-mx-1 h-[18px] w-px shrink-0 bg-[#808080]" />
    {tools.map((tool) => (
      <IconButton key={tool.name} name={tool.name}>
        {tool.art}
      </IconButton>
    ))}
    <button
      type="button"
      className="flex size-4 shrink-0 items-center justify-center rounded-sm bg-linear-to-b from-[#f87840] to-[#e04818] font-['DejaVu_Sans_Condensed',sans-serif] text-[8px] text-white"
    >
      Tick
    </button>
    <button
      type="button"
      className="-mx-1.5 flex h-[21px] w-7 shrink-0 items-center justify-center rounded-sm border border-[#303030] bg-white"
    >
      <span className={gold}>日</span>
    </button>
    {periods.map((period) => (
      <button type="button" key={period} className={gold}>
        {period}
      </button>
    ))}
    {minutes.map((minute) => (
      <button
        type="button"
        key={minute}
        className={`${green} ${
          minute.length > 2
            ? "font-['DejaVu_Sans_Condensed',sans-serif] text-[8px]"
            : "font-['Liberation_Sans',sans-serif] text-[11px]"
        }`}
      >
        {minute}
      </button>
    ))}
    <span className="absolute -top-[5px] right-[177px] h-[2px] w-[72px] rounded-b bg-[#a0a0a0]" />
    <span className="absolute -top-[5px] right-[100px] h-[2px] w-[72px] rounded-b bg-[#a0a0a0]" />
  </header>
);

const tabs = ["国内期货", "股指期货", "期权报价", "期权策略", "热点排名", "新闻资讯"];

const Sidebar = () => (
  <nav className="relative flex w-[15px] shrink-0 flex-col overflow-hidden border-r-2 border-[#d8d4d0] bg-[#c8c8c8]">
    <button
      type="button"
      className="flex h-[80px] shrink-0 flex-col items-center bg-[#808080] pt-2 text-[12px] leading-3 text-white [clip-path:polygon(0_0,100%_0,100%_100%,0_88%)]"
    >
      {"技术分析".split("").map((char) => (
        <span key={char}>{char}</span>
      ))}
      <svg viewBox="0 0 6 6" className="mt-[3px] size-1.5">
        <path d="M1 0L5 3L1 6Z" fill="#fff" />
      </svg>
    </button>
    {tabs.map((tab) => (
      <button
        type="button"
        key={tab}
        className="h-[82px] shrink-0 bg-[#505050] text-[12px] leading-3 text-[#303030] [clip-path:polygon(0_0,100%_0,100%_100%,0_89%)]"
      >
        <span className="flex h-[81px] flex-col items-center bg-[#f2f0ea] pt-3 [clip-path:polygon(0_0,100%_0,100%_100%,0_88%)]">
          {tab.split("").map((char) => (
            <span key={char}>{char}</span>
          ))}
        </span>
      </button>
    ))}
    <span className="absolute -bottom-2.5 -left-5 flex size-[35px] items-center justify-end rounded-full border border-[#208838] bg-linear-to-b from-[#70d888] to-[#28a848] pr-1 font-['Liberation_Sans',sans-serif] text-[11px] font-bold text-white">
      53
    </span>
  </nav>
);

const quotes = [
  ["最新", "2054.5", "g", "结算", "2095.0", "g"],
  ["涨跌", "-48.5", "g", "昨结", "2103.0", "w"],
  ["幅度", "-2.31%", "g", "开盘", "2102.5", "g"],
  ["总手", "583608", "y", "最高", "2118.0", "r"],
  ["现手", "4", "y", "最低", "2051.0", "g"],
  ["涨停", "2229.0", "r", "跌停", "1977.0", "g"],
  ["持仓", "359612", "y", "仓差", "24644", "y"],
  ["外盘", "271585", "r", "内盘", "312023", "g"],
];

const trades = [
  ["14:52", "2059.0", "340", "-28", "多平", "g"],
  [":19", "2058.0", "358", "-16", "多平", "g"],
  [":20", "2059.0", "246", "+80", "多开", "r"],
  [":22", "2058.0", "242", "+188", "空开", "g"],
  [":30", "2059.5", "256", "+58", "多开", "r"],
  ["14:53", "2059.5", "210", "+176", "空开", "g"],
  ["14:57", "2058.0", "374", "-62", "多平", "g"],
  [":17", "2056.0", "288", "+32", "空开", "g"],
  [":18", "2055.0", "760", "+192", "空开", "g"],
  [":34", "2052.5", "1118", "+714", "空开", "g"],
  ["14:59", "2054.5", "244", "+162", "空开", "g"],
  [":20", "2057.0", "206", "-4", "空平", "r"],
  [":23", "2056.0", "224", "-162", "多平", "g"],
  [":30", "2057.0", "300", "+126", "空开", "g"],
  [":36", "2057.0", "220", "+74", "空开", "g"],
  [":44", "2056.5", "318", "-94", "空平", "r"],
];

const tone: Record<string, string> = {
  g: "text-[#00e600]",
  r: "text-[#ff3c38]",
  y: "text-[#ffff00]",
  w: "text-[#e8e8e8]",
};

const num = "font-['Liberation_Sans',sans-serif] font-bold";

const QuotePanel = () => (
  <aside className="flex w-[243px] shrink-0 flex-col border-r-[3px] border-l border-r-[#d8cccc] border-l-[#c01008] text-[14px] text-[#d8d8d8]">
    <div className="flex h-6 shrink-0 items-center pr-4">
      <h1 className="flex-1 text-center text-[20px] leading-6 font-normal text-[#d8d800]">
        焦炭1909(j1909)
      </h1>
    </div>
    <div className="flex h-1.5 shrink-0 border-y border-[#c01008]">
      <span className="w-[177px] bg-[#ff3c38]" />
      <span className="flex-1 bg-[#00e600]" />
    </div>
    {[
      ["卖出", "2054.5", "8"],
      ["买入", "2053.0", "23"],
    ].map(([side, price, size]) => (
      <div
        key={side}
        className="flex h-[31px] shrink-0 items-center border-b border-[#c01008] pl-1 leading-[30px]"
      >
        <span className="w-[43px]">{side}</span>
        <span className={`w-20 text-[22px] text-[#00e600] ${num}`}>{price}</span>
        <span className={`text-[22px] text-[#ffff00] ${num}`}>{size}</span>
      </div>
    ))}
    <table className="w-full shrink-0 table-fixed leading-5">
      <colgroup>
        <col className="w-[42px]" />
        <col className="w-[71px]" />
        <col className="w-[46px]" />
        <col />
      </colgroup>
      <tbody>
        {quotes.map(([name, value, color, name2, value2, color2]) => (
          <tr key={name} className="h-5">
            <td className="pl-1">{name}</td>
            <td className={`text-right ${num} ${tone[color]}`}>{value}</td>
            <td className="pl-3.5">{name2}</td>
            <td className={`pr-1 text-right ${num} ${tone[color2]}`}>{value2}</td>
          </tr>
        ))}
      </tbody>
    </table>
    <table className="w-full shrink-0 table-fixed border-t border-[#c01008] leading-[22px]">
      <colgroup>
        <col className="w-[44px]" />
        <col className="w-[61px]" />
        <col className="w-[47px]" />
        <col className="w-[48px]" />
        <col />
      </colgroup>
      <thead>
        <tr className="h-[22px] text-[#808080]">
          <th className="pl-1 text-left font-normal">北京</th>
          <th className="text-right font-normal">价格</th>
          <th className="text-right font-normal whitespace-nowrap">√大单</th>
          <th className="text-right font-normal">仓差</th>
          <th className="pl-2 text-left font-normal whitespace-nowrap">性质</th>
        </tr>
      </thead>
      <tbody>
        {trades.map(([time, price, size, diff, kind, color], i) => (
          <tr key={i} className="h-[22px]">
            <td
              className={`pr-1 text-right text-[#e8e8e8] ${
                time.length > 3 ? num : "font-['Liberation_Sans',sans-serif] text-[11px]"
              }`}
            >
              {time}
            </td>
            <td className={`text-right ${num} ${tone.g}`}>{price}</td>
            <td className={`text-right ${num} ${tone[color]}`}>{size}</td>
            <td className={`text-right ${num} ${tone.y}`}>{diff}</td>
            <td className={`pl-2 whitespace-nowrap ${tone[color]}`}>{kind}</td>
          </tr>
        ))}
      </tbody>
    </table>
    <div className="mt-auto flex h-[17px] shrink-0">
      <button
        type="button"
        className="w-[37px] rounded-br border-r border-b border-[#c01008] text-[13px] leading-4 text-white"
      >
        笔
      </button>
      <span className="flex-1 border-t border-[#c01008]" />
    </div>
  </aside>
);

const Logo = () => (
  <div className="absolute top-2 right-1 flex gap-0.5 text-[#e2581c]">
    <svg viewBox="0 0 32 29" className="h-[29px] w-8">
      <rect width="32" height="29" rx="3" fill="#e2581c" />
      <circle cx="16" cy="14.5" r="11.5" fill="none" stroke="#fff" strokeWidth="2.5" />
      <path d="M6 12H26M16 12V21M10 21H22M12 16.500V21" stroke="#fff" strokeWidth="2.8" fill="none" />
    </svg>
    <div className="w-[69px] whitespace-nowrap">
      <div className="text-[20px] leading-[18px] font-bold">
        <span className="font-['Liberation_Sans',sans-serif] text-[24px] font-normal">5e</span>
        天资
      </div>
      <div className="font-['Liberation_Sans',sans-serif] text-[16px] leading-[14px] text-[#f0a890]">
        5etz.com
      </div>
    </div>
  </div>
);

const TitleBar = () => (
  <div className="flex h-[19px] shrink-0 items-center border-b border-[#c01008] pl-0.5 text-[12px] leading-[18px] text-[#e0e0e0]">
    <span className="flex-1">焦炭1909(020709)&lt;日线&gt;</span>
    <a href="#overlay" className="mr-5 text-[#78b8f8] underline">
      商品叠加
    </a>
    <a href="#period" className="mr-5 text-[#78b8f8] underline">
      周期
    </a>
    <svg viewBox="0 0 50 14" className="mr-px h-3.5 w-[50px]" fill="none" stroke="#78b8f8">
      <path d="M.5 .5H15.5V13.5H.5ZM17.5 .5H32.5V13.5H17.5ZM34.5 .5H49.5V13.5H34.5Z" />
      <path d="M2.5 7L6.5 3V5.5H13.5V8.5H6.5V11Z" />
      <path d="M30.5 7L26.5 3V5.5H19.5V8.5H26.5V11Z" />
      <path d="M34.5 10.5H43.5M43.5 1V13" />
      <path d="M46.5 2V12" strokeDasharray="2 1" strokeWidth="2" />
    </svg>
  </div>
);

const App: React.FC = () => {
  return (
    <div className="relative flex h-screen flex-col overflow-hidden bg-black font-['DejaVu_Sans','Noto_Sans_CJK_SC',sans-serif]">
      <Toolbar />
      <div className="flex min-h-0 flex-1 font-['Noto_Sans_CJK_SC',sans-serif]">
        <Sidebar />
        <div className="flex min-w-0 flex-1 border-b border-[#a8a8a8]">
          <main className="flex min-w-0 flex-1 flex-col">
            <TitleBar />
            <div className="flex min-h-0 flex-1 flex-col font-['DejaVu_Sans','Noto_Sans_CJK_SC',sans-serif]">
              <PricePanel />
              <VolumePanel />
              <MacdPanel />
              <KdjPanel />
              <QhlPanel />
              <CciPanel />
              <TimeAxis />
            </div>
          </main>
          <QuotePanel />
        </div>
      </div>
      <svg viewBox="0 0 15 13" className="absolute top-[30px] right-1 h-[13px] w-[15px]">
        <path d="M.5 .5H14.5V12.5H.5ZM3.5 3V9.5H11.5V3" fill="none" stroke="#78b8f8" />
      </svg>
      <Logo />
      <svg viewBox="0 0 24 5" className="absolute bottom-0 left-[44px] h-[5px] w-6">
        <path d="M0 4L20 0L24 5H0Z" fill="#f06030" />
      </svg>
    </div>
  );
};

export default App;
